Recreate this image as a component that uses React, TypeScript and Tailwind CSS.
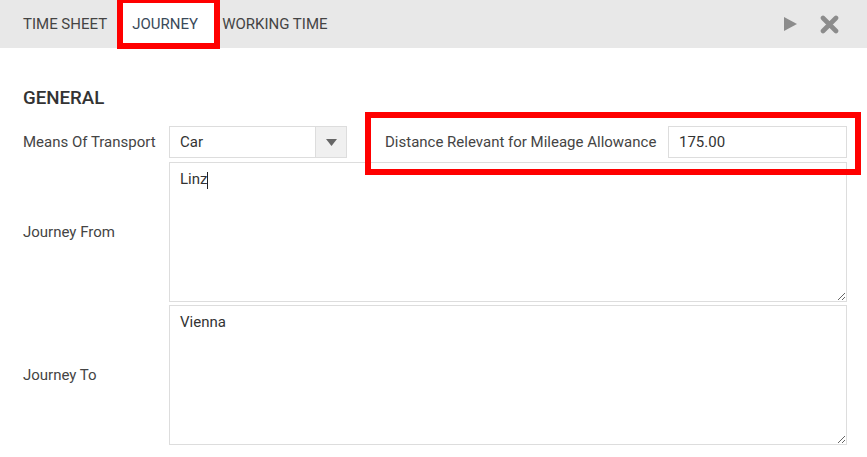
import React from "react";

export default function App() {
  const font = { fontFamily: "Roboto, 'Noto Sans', Arial, sans-serif" };
  return (
    <div className="relative w-[867px] h-[457px] bg-white overflow-hidden text-[#444]" style={font}>
      {/* top bar */}
      <div className="flex h-[48px] items-stretch bg-[#e8e8e8] text-[15px] text-[#444]">
        <div className="ml-[23px] flex items-center leading-none pt-[1px]">TIME SHEET</div>
        <div className="ml-[16px] flex w-[91px] items-center bg-white pl-[9px] leading-none pt-[1px] text-[#3a4a5a]">JOURNEY</div>
        <div className="ml-[8px] flex items-center leading-none pt-[1px]">WORKING TIME</div>
        <div className="flex-1" />
        <div className="flex items-center gap-[22px] pr-[28px]">
          <svg width="15" height="16" viewBox="0 0 15 16">
            <path d="M1 1 L14 8 L1 15 Z" fill="#8c8c8c" />
          </svg>
          <svg width="19" height="19" viewBox="0 0 19 19">
            <path d="M3 3 L16 16 M16 3 L3 16" stroke="#8c8c8c" strokeWidth="4.6" strokeLinecap="round" />
          </svg>
        </div>
      </div>

      {/* content */}
      <div className="pl-[23px] pr-[20px] pt-[37px]">
        <div className="text-[18.7px] font-medium leading-[27px] text-[#333]">GENERAL</div>
        <div className="mt-[14px] flex h-[32px] items-center text-[15px]">
          <div className="w-[146px]">Means Of Transport</div>
          <div className="flex h-[32px] w-[178px] border border-[#dddddd] bg-white">
            <div className="flex flex-1 items-center pl-[10px] text-[#333]">Car</div>
            <div className="flex w-[31px] items-center justify-center border-l border-[#dddddd] bg-[#f0f0f0]">
              <svg width="11" height="7" viewBox="0 0 11 7">
                <path d="M0 0 L11 0 L5.5 7 Z" fill="#666" />
              </svg>
            </div>
          </div>
          <div className="ml-[38px] w-[283px]">Distance Relevant for Mileage Allowance</div>
          <div className="flex h-[32px] w-[179px] items-center border border-[#dddddd] pl-[10px] text-[#333]">175.00</div>
        </div>

        <div className="mt-[4px] flex h-[140px] items-center text-[15px]">
          <div className="w-[146px]">Journey From</div>
          <div className="relative h-full w-[678px]">
            <textarea
              readOnly
              defaultValue="Linz"
              className="block h-full w-full border border-[#dddddd] px-[10px] pt-[6px] text-[15px] leading-[20px] text-[#333] outline-none"
              style={font}
            />
            <span className="absolute left-[38px] top-[10px] h-[17px] w-[1px] bg-[#222]" />
          </div>
        </div>

        <div className="mt-[3px] flex h-[140px] items-center text-[15px]">
          <div className="w-[146px]">Journey To</div>
          <div className="h-full w-[678px]">
            <textarea
              readOnly
              defaultValue="Vienna"
              className="block h-full w-full border border-[#dddddd] px-[10px] pt-[6px] text-[15px] leading-[20px] text-[#333] outline-none"
              style={font}
            />
          </div>
        </div>
      </div>

      {/* annotation boxes */}
      <div className="pointer-events-none absolute left-[117px] top-[-3px] h-[52px] w-[103px] border-[6px] border-[#ff0000]" />
      <div className="pointer-events-none absolute left-[365px] top-[112px] h-[63px] w-[496px] border-[6px] border-[#ff0000]" />
    </div>
  );
}
